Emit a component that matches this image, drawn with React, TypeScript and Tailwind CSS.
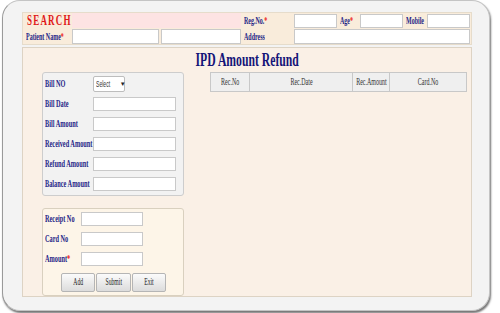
import React from "react";

// text in the source screenshot is squeezed horizontally, so scale glyphs only
function Sq({ children, className = "", center }: { children: React.ReactNode; className?: string; center?: boolean }) {
  return (
    <span className={`inline-block whitespace-nowrap scale-x-[0.6] ${center ? "origin-center" : "origin-left"} ${className}`}>
      {children}
    </span>
  );
}

function Star() {
  return <span className="text-[#e11]">*</span>;
}

function Box({ className = "" }: { className?: string }) {
  return <div className={`shrink-0 h-[14px] bg-white border border-[#c9c9c9] ${className}`} />;
}

function HeadLabel({ children, className = "" }: { children: React.ReactNode; className?: string }) {
  return (
    <div className={`shrink-0 flex items-center pl-[3px] text-[10px] font-bold text-[#1e1e86] leading-none ${className}`}>
      <Sq>{children}</Sq>
    </div>
  );
}

function FieldRow({ label, labelW, inputW, star }: { label: string; labelW: string; inputW: string; star?: boolean }) {
  return (
    <div className="flex items-center h-[20px]">
      <div className={`shrink-0 text-[10.5px] font-bold text-[#1e1e86] leading-none ${labelW}`}>
        <Sq>
          {label}
          {star && <Star />}
        </Sq>
      </div>
      <Box className={inputW} />
    </div>
  );
}

function Btn({ children, className = "" }: { children: React.ReactNode; className?: string }) {
  return (
    <div className={`shrink-0 h-[19px] flex items-center justify-center rounded-[2px] border border-[#b5b5b5] bg-gradient-to-b from-[#fbfbfb] to-[#dcdcdc] text-[9.5px] text-[#222] leading-none ${className}`}>
      <Sq center>{children}</Sq>
    </div>
  );
}

export default function App() {
  const cols = [
    { t: "Rec.No", w: "w-[38px]" },
    { t: "Rec.Date", w: "w-[103px]" },
    { t: "Rec.Amount", w: "w-[37px]" },
    { t: "Card.No", w: "w-[77px]" },
  ];

  return (
    <div className="min-h-screen bg-white font-['Liberation_Serif',serif]">
      <div className="ml-[2px] w-[488px] h-[311px] rounded-[18px] bg-[#f3f3f3] border border-[#c4c4c4] border-l-[#9a9a9a] shadow-[1px_2px_2px_rgba(0,0,0,0.55)] pt-[11px] pl-[19px]">
        {/* search header */}
        <div className="w-[450px] h-[33px] bg-[#f9ecdb] border border-[#e6dccb] flex flex-col">
          <div className="flex items-center h-[15px]">
            <div className="shrink-0 w-[49px] h-full flex items-center pl-[4px] text-[15px] font-bold text-[#e01818] leading-none">
              <Sq className="tracking-[2px]">SEARCH</Sq>
            </div>
            <div className="shrink-0 w-[169px] h-full bg-[#fde3e3]" />
            <HeadLabel className="w-[53px]">
              Reg.No.<Star />
            </HeadLabel>
            <Box className="w-[43px]" />
            <HeadLabel className="w-[23px]">
              Age<Star />
            </HeadLabel>
            <Box className="w-[43px]" />
            <HeadLabel className="w-[24px]">Mobile</HeadLabel>
            <Box className="w-[43px]" />
          </div>
          <div className="flex items-center h-[16px] mt-[1px]">
            <HeadLabel className="w-[49px]">
              Patient Name<Star />
            </HeadLabel>
            <Box className="w-[87px] h-[15px]" />
            <Box className="w-[80px] h-[15px] ml-[2px]" />
            <HeadLabel className="w-[53px]">Address</HeadLabel>
            <Box className="w-[176px] h-[15px]" />
          </div>
        </div>

        {/* main panel */}
        <div className="mt-[2px] w-[450px] h-[250px] bg-[#faf0e6] border border-[#ddd3c4]">
          <div className="pt-[2px] h-[21px] flex justify-center text-[19.5px] leading-[19px] font-bold text-[#141478]">
            <Sq center>IPD Amount Refund</Sq>
          </div>
          <div className="flex mt-[3px] pl-[19px]">
            <div className="shrink-0 w-[142px] flex flex-col">
              <div className="h-[124px] bg-[#f2f2f2] border border-[#cdcdcd] rounded-[3px] pt-px pl-[2px]">
                <div className="flex items-center h-[20px]">
                  <div className="shrink-0 w-[48px] text-[10.5px] font-bold text-[#1e1e86] leading-none">
                    <Sq>Bill NO</Sq>
                  </div>
                  <div className="shrink-0 w-[32px] h-[16px] bg-white border border-[#bdbdbd] rounded-[2px] flex items-center justify-between px-[2px] font-['Liberation_Sans',sans-serif] text-[8.5px] text-[#333] leading-none">
                    <Sq>Select</Sq>
                    <span className="text-[6px] text-[#222]">▼</span>
                  </div>
                </div>
                <FieldRow label="Bill Date" labelW="w-[48px]" inputW="w-[83px]" />
                <FieldRow label="Bill Amount" labelW="w-[48px]" inputW="w-[83px]" />
                <FieldRow label="Received Amount" labelW="w-[48px]" inputW="w-[83px]" />
                <FieldRow label="Refund Amount" labelW="w-[48px]" inputW="w-[83px]" />
                <FieldRow label="Balance Amount" labelW="w-[48px]" inputW="w-[83px]" />
              </div>

              <div className="mt-[12px] h-[88px] bg-[#fdf5e8] border border-[#d9d0bf] rounded-[3px] pl-[2px]">
                <FieldRow label="Receipt No" labelW="w-[36px]" inputW="w-[62px]" />
                <FieldRow label="Card No" labelW="w-[36px]" inputW="w-[62px]" />
                <FieldRow label="Amount" labelW="w-[36px]" inputW="w-[62px]" star />
                <div className="flex gap-px mt-[4px] pl-[16px]">
                  <Btn className="w-[34px]">Add</Btn>
                  <Btn className="w-[35px]">Submit</Btn>
                  <Btn className="w-[34px]">Exit</Btn>
                </div>
              </div>
            </div>

            <div className="ml-[26px] flex h-[20px] bg-[#efefef] border border-[#c8c8c8] self-start">
              {cols.map((c, i) => (
                <div
                  key={c.t}
                  className={`shrink-0 flex items-center justify-center text-[10px] text-[#333] leading-none ${c.w} ${i > 0 ? "border-l border-[#c8c8c8]" : ""}`}
                >
                  <Sq center>{c.t}</Sq>
                </div>
              ))}
            </div>
          </div>
        </div>
      </div>
    </div>
  );
}
